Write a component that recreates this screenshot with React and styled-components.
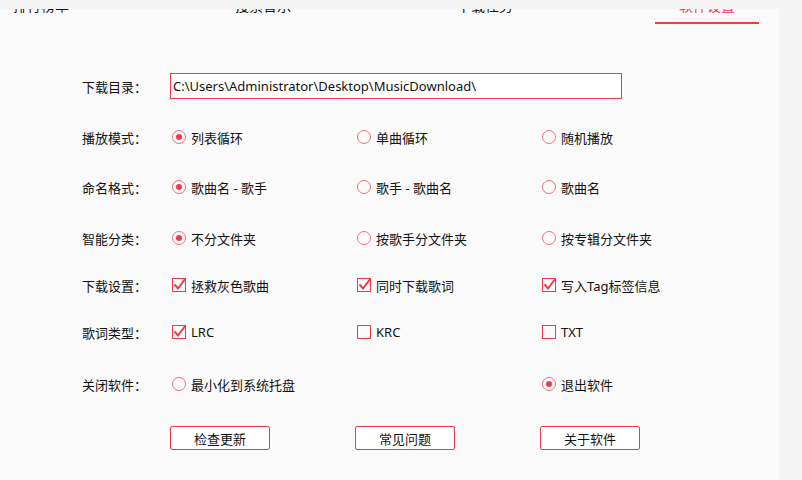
import React, { useState } from "react";
import styled, { createGlobalStyle } from "styled-components";

const RED = "#f0394b";

const GlobalStyle = createGlobalStyle`
  html, body {
    margin: 0;
    padding: 0;
    background: #f4f4f4;
  }
  body {
    font-family: "Noto Sans", "Noto Sans CJK SC", sans-serif;
    color: #111;
  }
`;

const Page = styled.div`
  width: 802px;
  height: 480px;
  padding-top: 9px;
  box-sizing: border-box;
  overflow: hidden;
`;

const Panel = styled.div`
  width: 779px;
  height: 471px;
  background: #fafafa;
  overflow: hidden;
`;

const TabBar = styled.div`
  display: flex;
  margin-top: -12px;
  margin-left: -70px;
  height: 27px;
`;

const Tab = styled.div`
  flex: 0 0 222px;
  display: flex;
  flex-direction: column;
  align-items: center;
  justify-content: space-between;
  font-size: 14px;
  line-height: 18px;
  color: ${({ $active }) => ($active ? RED : "#111")};

  &::after {
    content: "";
    width: 104px;
    height: 2px;
    background: ${({ $active }) => ($active ? RED : "transparent")};
  }
`;

const Form = styled.div`
  padding: 49px 0 0 82px;
`;

const Row = styled.div`
  display: grid;
  grid-template-columns: 88px 185px 185px 185px;
  align-items: center;
  height: ${({ $h }) => $h}px;
  margin-top: ${({ $mt }) => $mt || 0}px;
  font-size: 13px;
`;

const Label = styled.div`
  font-size: 13px;
`;

const PathInput = styled.div`
  grid-column: 2 / span 3;
  width: 448px;
  height: 24px;
  border: 1px solid ${RED};
  box-sizing: content-box;
  display: flex;
  align-items: center;
  padding-left: 2px;
  font-size: 13px;
  background: #fff;
`;

const Option = styled.label`
  display: flex;
  align-items: center;
  gap: 5px;
  padding-left: 2px;
  cursor: pointer;
  font-size: 13px;
`;

const RadioDot = styled.span`
  width: 12px;
  height: 12px;
  border: 1px solid #f26f7a;
  border-radius: 50%;
  display: flex;
  align-items: center;
  justify-content: center;

  &::after {
    content: "";
    width: 6px;
    height: 6px;
    border-radius: 50%;
    background: ${({ $on }) => ($on ? RED : "transparent")};
  }
`;

const Box = styled.span`
  position: relative;
  width: 12px;
  height: 12px;
  border: 1px solid ${RED};

  svg {
    position: absolute;
    left: 0;
    top: -2px;
  }
`;

const Button = styled.button`
  width: 100px;
  height: 24px;
  border: 1px solid ${RED};
  border-radius: 2px;
  background: #fff;
  font-family: inherit;
  font-size: 13px;
  color: #111;
  padding: 0;
  cursor: pointer;
`;

const Radio = ({ on, children, onClick }) => (
  <Option onClick={onClick}>
    <RadioDot $on={on} />
    {children}
  </Option>
);

const Check = ({ on, children, onClick }) => (
  <Option onClick={onClick}>
    <Box>
      {on && (
        <svg width="14" height="14" viewBox="0 0 14 14">
          <path d="M1.5 7.5 L5 11.5 L12.5 1.5" fill="none" stroke={RED} strokeWidth="2" />
        </svg>
      )}
    </Box>
    {children}
  </Option>
);

const radioRows = [
  { label: "播放模式：", opts: ["列表循环", "单曲循环", "随机播放"], h: 50, mt: 13 },
  { label: "命名格式：", opts: ["歌曲名 - 歌手", "歌手 - 歌曲名", "歌曲名"], h: 50 },
  { label: "智能分类：", opts: ["不分文件夹", "按歌手分文件夹", "按专辑分文件夹"], h: 52 },
];

const App = () => {
  const [radios, setRadios] = useState([0, 0, 0]);
  const [dl, setDl] = useState([true, true, true]);
  const [lrc, setLrc] = useState([true, false, false]);
  const [close, setClose] = useState(2);

  const toggle = (arr, set, i) => set(arr.map((v, j) => (j === i ? !v : v)));

  return (
    <Page>
      <GlobalStyle />
      <Panel>
        <TabBar>
          <Tab>排行榜单</Tab>
          <Tab>搜索音乐</Tab>
          <Tab>下载任务</Tab>
          <Tab $active>软件设置</Tab>
        </TabBar>
        <Form>
          <Row $h={26}>
            <Label>下载目录：</Label>
            <PathInput>C:\Users\Administrator\Desktop\MusicDownload\</PathInput>
          </Row>
          {radioRows.map((r, ri) => (
            <Row $h={r.h} $mt={r.mt} key={r.label}>
              <Label>{r.label}</Label>
              {r.opts.map((o, oi) => (
                <Radio
                  key={o}
                  on={radios[ri] === oi}
                  onClick={() => setRadios(radios.map((v, j) => (j === ri ? oi : v)))}
                >
                  {o}
                </Radio>
              ))}
            </Row>
          ))}
          <Row $h={42}>
            <Label>下载设置：</Label>
            {["拯救灰色歌曲", "同时下载歌词", "写入Tag标签信息"].map((o, i) => (
              <Check key={o} on={dl[i]} onClick={() => toggle(dl, setDl, i)}>
                {o}
              </Check>
            ))}
          </Row>
          <Row $h={52}>
            <Label>歌词类型：</Label>
            {["LRC", "KRC", "TXT"].map((o, i) => (
              <Check key={o} on={lrc[i]} onClick={() => toggle(lrc, setLrc, i)}>
                {o}
              </Check>
            ))}
          </Row>
          <Row $h={52}>
            <Label>关闭软件：</Label>
            <Radio on={close === 0} onClick={() => setClose(0)}>
              最小化到系统托盘
            </Radio>
            <span />
            <Radio on={close === 2} onClick={() => setClose(2)}>
              退出软件
            </Radio>
          </Row>
          <Row $h={56}>
            <span />
            <Button>检查更新</Button>
            <Button>常见问题</Button>
            <Button>关于软件</Button>
          </Row>
        </Form>
      </Panel>
    </Page>
  );
};

export default App;
